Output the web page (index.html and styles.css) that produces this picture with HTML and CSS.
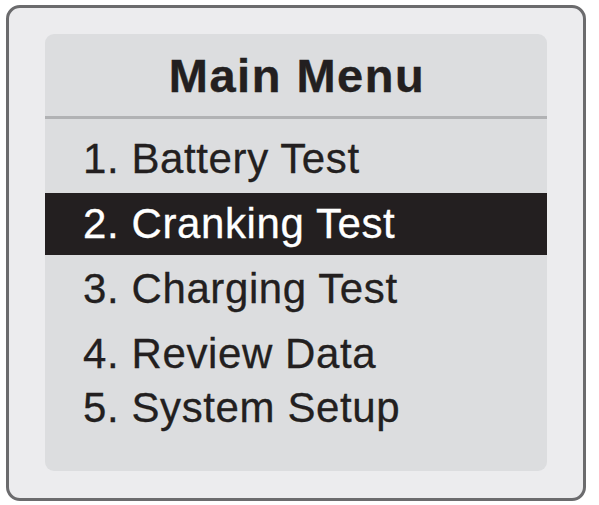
FILE: index.html
```html
<!DOCTYPE html>
<html lang="en">
<head>
<meta charset="utf-8">
<title>Main Menu</title>
<link rel="stylesheet" href="styles.css">
</head>
<body>
  <div class="device">
    <div class="screen">
      <div class="title">Main Menu</div>
      <ul class="menu">
        <li class="item">1. Battery Test</li>
        <li class="item item-selected">2. Cranking Test</li>
        <li class="item">3. Charging Test</li>
        <li class="item">4. Review Data</li>
        <li class="item item-last">5. System Setup</li>
      </ul>
    </div>
  </div>
</body>
</html>
```

FILE: styles.css
```css
html, body {
  margin: 0;
  padding: 0;
  background: #ffffff;
}

body {
  font-family: "Liberation Sans", Arial, Helvetica, sans-serif;
  color: #231f20;
}

.device {
  box-sizing: border-box;
  margin: 5px 0 0 6px;
  width: 580px;
  height: 496px;
  border: 3px solid #6b6b6d;
  border-radius: 14px;
  background: #ececee;
  padding: 26px 36px;
}

.screen {
  box-sizing: border-box;
  height: 437px;
  background: #dcdddf;
  border-radius: 9px;
  overflow: hidden;
}

.title {
  height: 82px;
  display: flex;
  align-items: center;
  justify-content: center;
  font-size: 47px;
  font-weight: bold;
  letter-spacing: 1.5px;
  padding-left: 2px;
  border-bottom: 3px solid #b1b2b4;
  -webkit-text-stroke: 0.4px #231f20;
}

.menu {
  list-style: none;
  margin: 0;
  padding: 9px 0 0 0;
  display: flex;
  flex-direction: column;
  gap: 3px;
}

.item {
  height: 62px;
  line-height: 62px;
  font-size: 42px;
  letter-spacing: 0.6px;
  padding-left: 38px;
  white-space: nowrap;
  -webkit-text-stroke: 0.3px #231f20;
}

.item-selected {
  background: #231f20;
  color: #ffffff;
  -webkit-text-stroke: 0.3px #ffffff;
}

.item-last {
  margin-top: -11px;
}
```
